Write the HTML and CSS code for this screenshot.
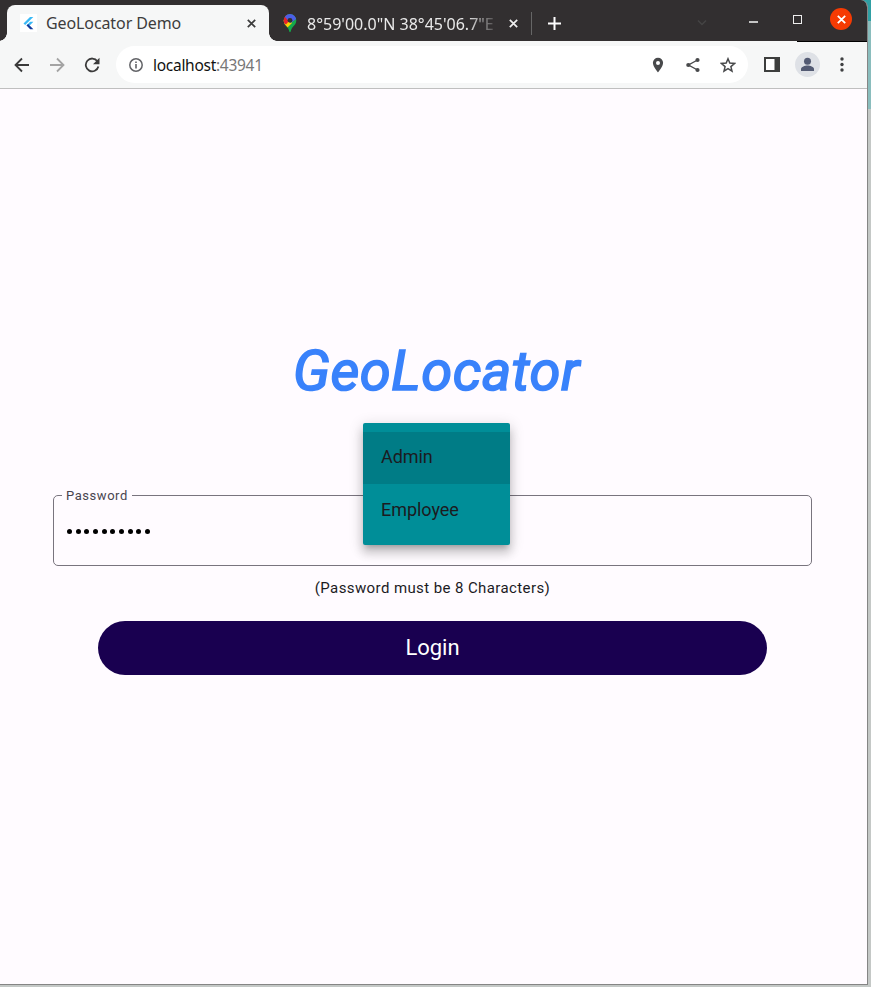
FILE: index.html
```html
<!DOCTYPE html>
<html lang="en">
<head>
<meta charset="utf-8">
<title>GeoLocator Demo</title>
<link rel="stylesheet" href="styles.css">
</head>
<body>
<div class="window">
  <header class="tabstrip">
    <div class="tab active">
      <svg class="favicon" width="17" height="18" viewBox="0 0 17 18"><rect width="17" height="18" fill="#fff"/><path d="M3.500 9.500 10 3h3.300L5.200 11z" fill="#38b9f6"/><path d="M6.500 11.500 10.200 7.800h3.200L9.700 11.500z" fill="#36b7f5"/><path d="m6.500 11.500 1.600-1.600 5.300 5.400h-3.200z" fill="#123a9c"/></svg>
      <span class="tab-title">GeoLocator Demo</span>
      <svg class="tab-close" width="9" height="9" viewBox="0 0 9 9"><path d="m.8.8 7.400 7.400m0-7.400L.8 8.200"/></svg>
    </div>
    <div class="tab inactive">
      <svg class="pin" width="14" height="19" viewBox="0 0 14 19"><defs><clipPath id="map-pin"><path d="M7 0a6.300 6.300 0 0 1 6.300 6.400c0 3-1.800 4.600-3.300 6.400C8.400 14.700 8.200 16 7.700 17.500q-.7 1.400-1.400 0C5.800 16 5.600 14.700 4 12.800 2.500 11 .7 9.400.7 6.400A6.300 6.300 0 0 1 7 0z"/></clipPath></defs><g clip-path="url(#map-pin)"><path fill="#14a94b" d="M0 0h14v19H0z"/><path fill="#fbd004" d="M0 13.500V6l7-1 2 4-5 5z"/><path fill="#e8202a" d="M0 8.500V0h4l3 6-4 4.500z"/><path fill="#4c5ee8" d="M2 0h12v4.500L7.500 9 2 3z"/></g><circle cx="7" cy="6.300" r="2.400" fill="#322f30"/></svg>
      <span class="tab-title">8°59'00.0"N 38°45'06.7"E</span>
      <svg class="tab-close" width="9" height="9" viewBox="0 0 9 9"><path d="m.8.8 7.400 7.400m0-7.400L.8 8.200"/></svg>
    </div>
    <svg class="new-tab" width="13" height="13" viewBox="0 0 13 13"><path d="M6.500 0v13M0 6.500h13"/></svg>
    <div class="window-controls">
      <svg class="chevron" width="10" height="8" viewBox="0 0 10 8"><path d="m1 1.500 4 4 4-4"/></svg>
      <span class="minimize"></span>
      <span class="maximize"></span>
      <span class="close"><svg width="9" height="9" viewBox="0 0 9 9"><path d="m.8.8 7.400 7.400m0-7.400L.8 8.200"/></svg></span>
    </div>
  </header>
  <nav class="toolbar">
    <svg class="line nav" width="16" height="16" viewBox="0 0 16 16"><path d="M15 8H2M8 1.500 1.500 8 8 14.500"/></svg>
    <svg class="line nav forward" width="16" height="16" viewBox="0 0 16 16"><path d="M1 8h13M8 1.500 14.500 8 8 14.500"/></svg>
    <svg class="reload" width="16" height="16" viewBox="0 0 16 16"><path d="M13.400 4.200A6.400 6.400 0 1 0 14.400 9.500" fill="none" stroke="#3b3b3b" stroke-width="1.800"/><path d="M15.500.7v6.600H9z" fill="#3b3b3b"/></svg>
    <div class="address">
      <svg width="14" height="14" viewBox="0 0 14 14"><circle cx="7" cy="7" r="6.200" fill="none" stroke="#626367" stroke-width="1.500"/><path d="M6.200 6h1.600v4.500H6.200zM6.200 3.400h1.600V5H6.200z" fill="#626367"/></svg>
      <span class="url">localhost<span class="port">:43941</span></span>
      <div class="address-actions">
        <svg width="12" height="16" viewBox="0 0 12 16"><path fill="#48494b" fill-rule="evenodd" d="M6 .7a5.100 5.100 0 0 0-5.100 5.100C.9 9.700 6 15.400 6 15.400s5.100-5.700 5.100-9.600A5.100 5.100 0 0 0 6 .7zm0 3.200a2 2 0 1 1 0 4 2 2 0 0 1 0-4z"/></svg>
        <svg width="14" height="16" viewBox="0 0 14 16"><path d="M11.500 3 2.500 8l9 5" fill="none" stroke="#48494b" stroke-width="1.400"/><g fill="#48494b"><circle cx="11.500" cy="3" r="2.100"/><circle cx="2.300" cy="8" r="2.100"/><circle cx="11.500" cy="13" r="2.100"/></g></svg>
        <svg width="16" height="16" viewBox="0 0 16 16"><path d="m8 1.800 1.800 4.300 4.700.4-3.600 3.100 1.100 4.600-4-2.500-4 2.500 1.100-4.600-3.600-3.100 4.700-.4z" fill="none" stroke="#48494b" stroke-width="1.500"/></svg>
      </div>
    </div>
    <svg class="panel" width="16" height="15" viewBox="0 0 16 15"><path d="M1 1h14v13H1z" fill="#fff" stroke="#3d3e3d" stroke-width="2"/><path d="M10.500 0H16v15h-5.500z" fill="#3d3e3d"/></svg>
    <svg class="avatar" width="25" height="25" viewBox="0 0 25 25"><circle cx="12.500" cy="12.500" r="12.500" fill="#dee1e6"/><circle cx="12.500" cy="9.200" r="3.500" fill="#535b73"/><path d="M6 19v-2c0-2.300 4-3.500 6.500-3.500s6.500 1.200 6.500 3.500v2z" fill="#535b73"/></svg>
    <svg class="more" width="4" height="15" viewBox="0 0 4 15"><g fill="#3f4042"><circle cx="2" cy="2" r="1.700"/><circle cx="2" cy="7.500" r="1.700"/><circle cx="2" cy="13" r="1.700"/></g></svg>
  </nav>
  <main class="page">
    <h1>GeoLocator</h1>
    <fieldset class="password">
      <legend>Password</legend>
      <div class="dots"><i></i><i></i><i></i><i></i><i></i><i></i><i></i><i></i><i></i><i></i></div>
    </fieldset>
    <p class="hint">(Password must be 8 Characters)</p>
    <button class="login">Login</button>
    <div class="menu">
      <div class="option selected">Admin</div>
      <div class="option">Employee</div>
    </div>
  </main>
</div>
</body>
</html>
```
FILE: styles.css
```css
* { box-sizing: border-box; }
body {
  margin: 0;
  width: 871px;
  height: 987px;
  overflow: hidden;
  background: linear-gradient(#2f9fa3 0 21px, #8abdbd 21px 109px, #c4c8c6 109px);
  font-family: Roboto, sans-serif;
}
svg { display: block; flex: none; }
.window {
  width: 868px;
  height: 985px;
  border-right: 1px solid #858585;
  border-bottom: 1px solid #858585;
  background: #fffbff;
  border-top-right-radius: 7px;
  overflow: hidden;
}
.tabstrip {
  height: 41px;
  display: flex;
  background: #322f30;
  padding-left: 7px;
  position: relative;
}
.tab {
  display: flex;
  align-items: center;
  font-family: "Noto Sans", sans-serif;
  font-size: 16px;
  white-space: nowrap;
}
.tab-close { fill: none; stroke: #3c3c3c; stroke-width: 1.700; }
.active {
  width: 262px;
  height: 36px;
  margin-top: 5px;
  padding: 0 13px 0 13px;
  border-radius: 8px 8px 0 0;
  background: #f6f7f7;
  color: #3d3d3d;
  position: relative;
}
.active::before, .active::after {
  content: "";
  position: absolute;
  bottom: 0;
  width: 8px;
  height: 8px;
}
.active::before { left: -8px; background: radial-gradient(circle at 0 0, transparent 7.500px, #f6f7f7 8px); }
.active::after { right: -8px; background: radial-gradient(circle at 100% 0, transparent 7.500px, #f6f7f7 8px); }
.active .tab-title { margin-left: 9px; letter-spacing: -.1px; }
.active .tab-close { margin-left: auto; }
.inactive {
  width: 263px;
  height: 23px;
  margin-top: 12px;
  padding: 0 13px 0 14px;
  border-right: 1px solid #666;
  color: #e9e9e9;
}
.inactive .tab-title {
  width: 190px;
  margin-left: 10px;
  overflow: hidden;
  letter-spacing: 0;
  -webkit-mask-image: linear-gradient(90deg, #000 84%, transparent 102%);
}
.inactive .tab-close { margin-left: auto; stroke: #eee; }
.new-tab { margin: 17px 0 0 16px; fill: none; stroke: #fff; stroke-width: 2; }
.window-controls { display: flex; margin-left: auto; padding-right: 15px; }
.chevron { margin-top: 19px; fill: none; stroke: #454444; stroke-width: 1.500; }
.minimize { width: 9px; height: 2px; margin: 21px 0 0 42px; background: #c5c5c5; }
.maximize { width: 9px; height: 9px; margin: 15px 0 0 35px; border: 1px solid #eee; }
.close {
  width: 22px;
  height: 22px;
  margin: 8px 0 0 28px;
  display: grid;
  place-items: center;
  border-radius: 50%;
  background: #f63b03;
}
.close svg { fill: none; stroke: #fff; stroke-width: 1.800; }
.toolbar {
  height: 48px;
  padding-left: 14px;
  display: flex;
  align-items: center;
  border-bottom: 1px solid #bfbfbf;
  background: linear-gradient(#000, #000) 797px 0 / 70px 1px no-repeat #f6f7f7;
}
.line { fill: none; stroke: #3b3b3b; stroke-width: 1.800; }
.forward { margin-left: 19px; stroke: #a4a4a4; }
.reload { margin-left: 19px; }
.address {
  width: 632px;
  height: 37px;
  margin-left: 16px;
  padding: 0 12px 0 13px;
  display: flex;
  align-items: center;
  border-radius: 19px;
  background: #fff;
}
.url {
  margin-left: 10px;
  font: 15.500px "Noto Sans", sans-serif;
  letter-spacing: -.28px;
  color: #111;
}
.port { color: #777; }
.address-actions { display: flex; gap: 20px; margin-left: auto; align-items: center; }
.address-actions svg:first-child { margin-right: 2px; }
.panel { margin-left: 16px; }
.avatar { margin-left: 15px; }
.more { margin-left: 20px; }
.page {
  position: relative;
  height: 895px;
  display: flex;
  flex-direction: column;
  align-items: center;
  padding-right: 2px;
}
h1 {
  margin: 249px 0 0 8px;
  font: italic 400 56px/66px Roboto, sans-serif;
  letter-spacing: .55px;
  -webkit-text-stroke: 1.700px #3982fb;
  color: #3982fb;
}
.password {
  width: 759px;
  height: 78px;
  margin: 84px 1px 0 0;
  padding: 0 13px;
  border: 1px solid #79747e;
  border-radius: 5px;
}
legend {
  height: 15px;
  padding: 0 4px;
  margin-left: -4.500px;
  font-size: 13px;
  line-height: 15px;
  letter-spacing: .55px;
  color: #49454f;
}
.dots { display: flex; gap: 3.670px; margin: 26px 0 0 .5px; }
.dots i { width: 5px; height: 5px; border-radius: 50%; background: #000; }
.hint {
  margin: 13px 0 0;
  font-size: 15px;
  line-height: 18px;
  letter-spacing: .4px;
  color: #1c1b1f;
}
.login {
  width: 669px;
  height: 54.400px;
  margin-top: 23.500px;
  padding: 0 0 1px;
  border: 0;
  border-radius: 28px;
  background: #190050;
  color: #fff;
  font: 22px Roboto, sans-serif;
}
.menu {
  position: absolute;
  left: 363px;
  top: 334px;
  width: 147.400px;
  height: 122.400px;
  padding-top: 9px;
  border-radius: 2px;
  background: #008e98;
  box-shadow: 0 5px 5px -3px #0003, 0 8px 10px 1px #00000024, 0 3px 14px 2px #0000001f;
}
.option {
  height: 52px;
  padding-left: 18px;
  font-size: 18px;
  line-height: 52px;
  letter-spacing: -.05px;
  color: #1c1b1f;
}
.selected { line-height: 50px; background: #007c86; }
```
